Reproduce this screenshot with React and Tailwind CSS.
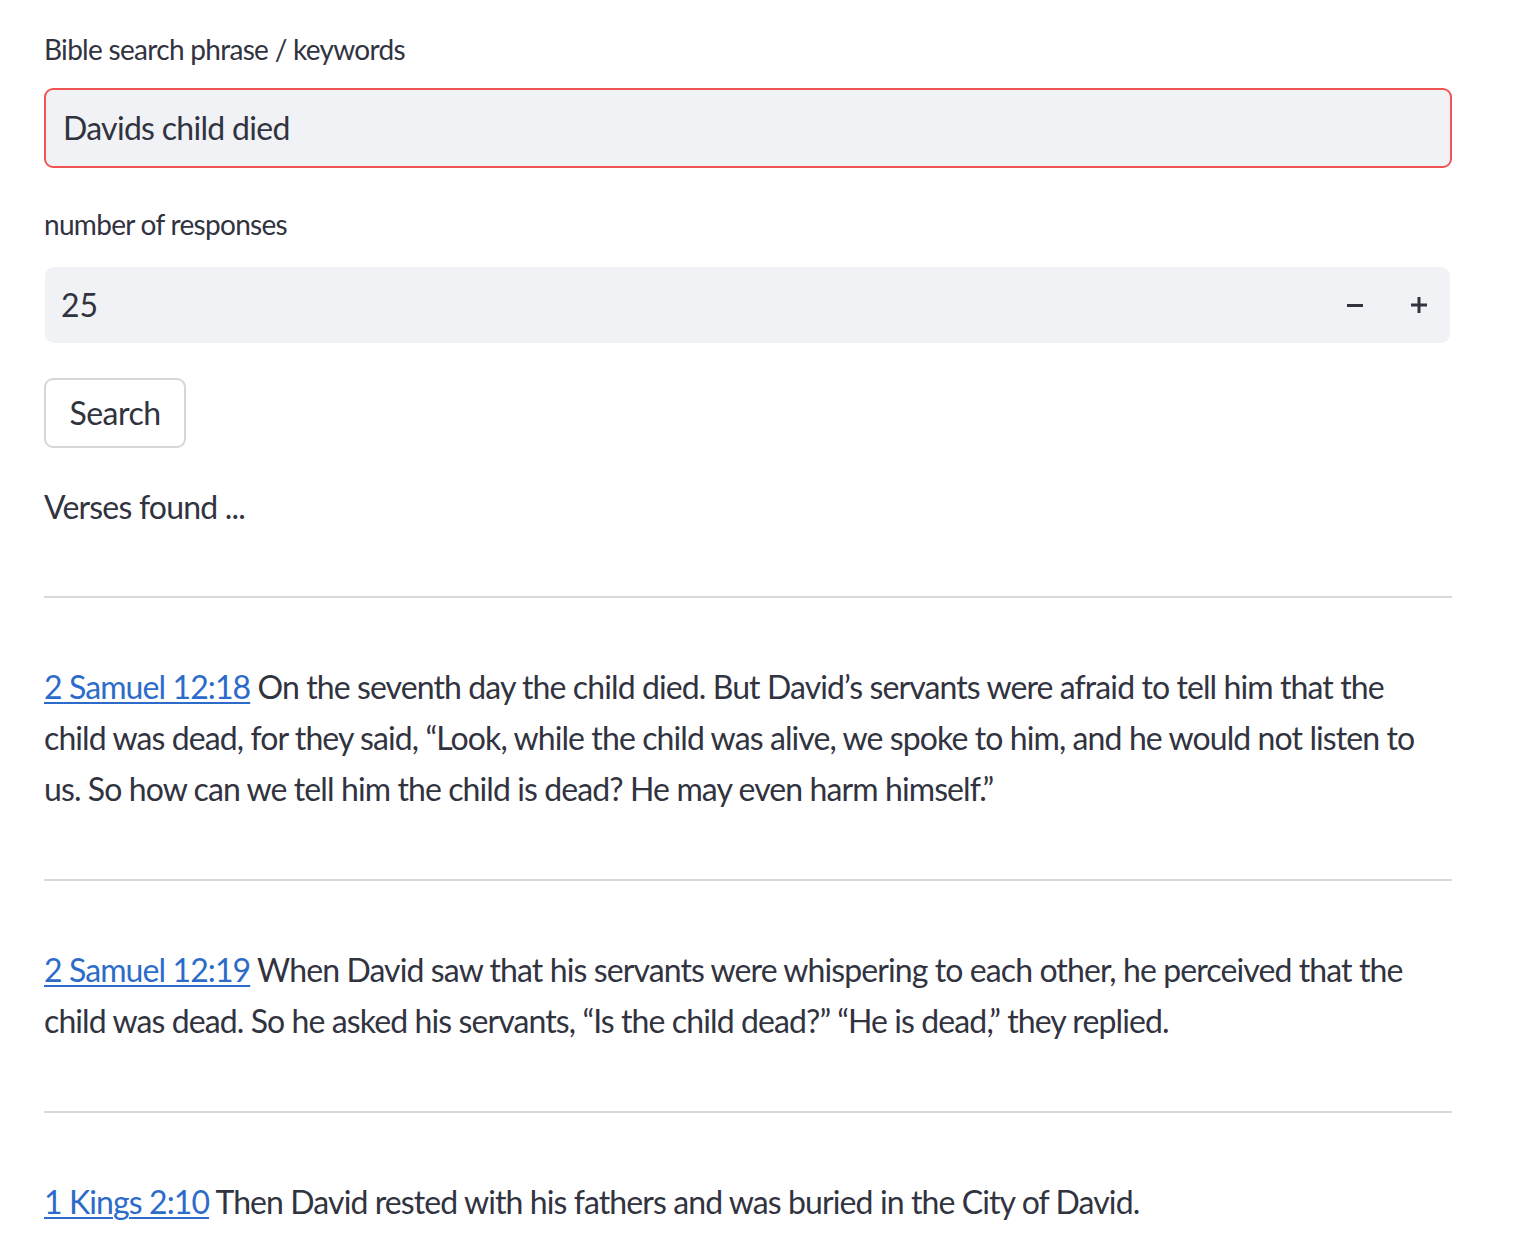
import { Fragment, useState } from 'react';

// lines kept as in the source layout so the wrap matches
const verses = [
  {
    ref: '2 Samuel 12:18',
    lines: [
      'On the seventh day the child died. But David’s servants were afraid to tell him that the',
      'child was dead, for they said, “Look, while the child was alive, we spoke to him, and he would not listen to',
      'us. So how can we tell him the child is dead? He may even harm himself.”',
    ],
  },
  {
    ref: '2 Samuel 12:19',
    lines: [
      'When David saw that his servants were whispering to each other, he perceived that the',
      'child was dead. So he asked his servants, “Is the child dead?” “He is dead,” they replied.',
    ],
  },
  {
    ref: '1 Kings 2:10',
    lines: ['Then David rested with his fathers and was buried in the City of David.'],
  },
];

function Divider() {
  return <div className="h-[2px] w-full bg-[#d9d9dc]" />;
}

export default function App() {
  const [query, setQuery] = useState('Davids child died');
  const [count, setCount] = useState(25);

  return (
    <div className="min-h-screen bg-white text-[#31333f] font-['Lato','Liberation_Sans',sans-serif]">
      <div className="w-[1408px] ml-[44px] pt-[32px]">
        <label className="block text-[28px] leading-[34px] tracking-[-0.7px]">Bible search phrase / keywords</label>
        <div className="mt-[22px] h-[80px] rounded-[9px] border-2 border-[#ef5555] bg-[#f0f2f6] flex items-center px-[17px]">
          <input
            value={query}
            onChange={(e) => setQuery(e.target.value)}
            className="w-full bg-transparent text-[32px] tracking-[-0.7px] outline-none text-[#31333f]"
          />
        </div>

        <label className="block mt-[39px] text-[28px] leading-[34px] tracking-[-0.7px]">number of responses</label>
        <div className="mt-[26px] ml-px w-[1405px] h-[76px] rounded-[9px] bg-[#f0f2f6] flex items-center pl-[16px]">
          <span className="flex-1 text-[32px]">{count}</span>
          <button type="button" onClick={() => setCount(count - 1)} className="w-[64px] h-full flex items-center justify-center">
            <span className="block w-[16px] h-[3px] bg-[#31333f]" />
          </button>
          <button type="button" onClick={() => setCount(count + 1)} className="w-[64px] h-full flex items-center justify-center mr-[-1px]">
            <svg width="16" height="16" viewBox="0 0 16 16">
              <rect x="0" y="6.5" width="16" height="3" fill="#31333f" />
              <rect x="6.5" y="0" width="3" height="16" fill="#31333f" />
            </svg>
          </button>
        </div>

        <button
          type="button"
          className="mt-[35px] w-[142px] h-[70px] rounded-[9px] border-2 border-[#d6d6d9] bg-white text-[32px] tracking-[-0.5px] flex items-center justify-center"
        >
          Search
        </button>

        <p className="mt-[33px] text-[32px] leading-[51px] tracking-[-0.8px]">Verses found ...</p>

        <div className="mt-[64px]">
          <Divider />
        </div>

        {verses.map((v, i) => (
          <div key={v.ref}>
            <p className="pt-[63px] text-[32px] leading-[51px] tracking-[-0.9px] whitespace-nowrap">
              <a href="#" className="text-[#2c6bc9] underline underline-offset-[3px] decoration-2">
                {v.ref}
              </a>{' '}
              {v.lines.map((line, j) => (
                <Fragment key={j}>
                  {j > 0 && <br />}
                  {line}
                </Fragment>
              ))}
            </p>
            {i < verses.length - 1 && (
              <div className="mt-[65px]">
                <Divider />
              </div>
            )}
          </div>
        ))}
      </div>
    </div>
  );
}
